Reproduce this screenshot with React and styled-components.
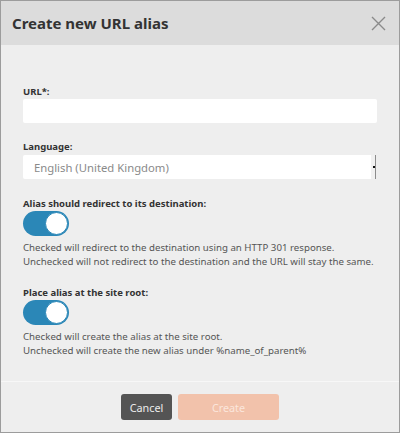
import styled, { createGlobalStyle } from 'styled-components'

const GlobalStyle = createGlobalStyle`
  html, body {
    margin: 0;
    padding: 0;
    background: #eeeeee;
  }
  * {
    box-sizing: border-box;
  }
`

const Dialog = styled.div`
  width: 400px;
  height: 433px;
  display: flex;
  flex-direction: column;
  border: 1px solid #9c9c9c;
  background: #eeeeee;
  font-family: "Noto Sans", "Open Sans", sans-serif;
  color: #333;
`

const Header = styled.div`
  height: 44px;
  flex: none;
  display: flex;
  align-items: center;
  justify-content: space-between;
  padding: 0 11px 0 11px;
  background: #dcdcdc;
`

const Title = styled.h1`
  margin: 0;
  font-size: 15px;
  font-weight: 700;
  color: #333;
`

const CloseButton = styled.button`
  width: 18px;
  height: 18px;
  padding: 0;
  margin-right: 1px;
  border: 0;
  background: none;
  display: flex;
  align-items: center;
  justify-content: center;
`

const Body = styled.div`
  flex: 1;
  padding: 40px 22px 0 22px;
  display: flex;
  flex-direction: column;
`

const Field = styled.div`
  display: flex;
  flex-direction: column;
  margin-bottom: ${(p) => p.$gap}px;
`

const Label = styled.label`
  font-size: 9.5px;
  font-weight: 700;
  line-height: 14px;
  color: #333;
  margin-bottom: ${(p) => p.$gap || 0}px;
`

const TextInput = styled.div`
  height: 24px;
  background: #fff;
  border-radius: 2px;
`

const Select = styled.div`
  height: 24px;
  display: flex;
  align-items: center;
  background: #fff;
  border-radius: 2px 0 0 2px;
  margin-right: 1px;
`

const SelectText = styled.span`
  flex: 1;
  padding-left: 11px;
  font-size: 11.3px;
  color: #8a8a8a;
`

const SelectEdge = styled.span`
  width: 5px;
  align-self: stretch;
  display: flex;
  align-items: center;
  background: #f1f1f1;
  border-right: 1px solid #8c8c8c;
  &::before {
    content: '';
    display: block;
    width: 2px;
    height: 2px;
    margin-left: 2px;
    background: #111;
  }
`

const Toggle = styled.span`
  width: 46px;
  height: 25px;
  border-radius: 13px;
  background: #2b87b7;
  display: flex;
  align-items: center;
  justify-content: ${(p) => (p.$on ? 'flex-end' : 'flex-start')};
  padding: 0 1px;
`

const Knob = styled.span`
  width: 23px;
  height: 23px;
  border-radius: 50%;
  background: #fff;
  border: 1.5px solid #2b87b7;
`

const Help = styled.p`
  margin: 5px 0 0 0;
  font-size: 9.7px;
  line-height: 14px;
  color: #555;
`

const Footer = styled.div`
  height: 51px;
  flex: none;
  display: flex;
  justify-content: center;
  align-items: flex-start;
  gap: 6px;
  padding-top: 12px;
  border-top: 1px solid #f7f7f7;
`

const Button = styled.button`
  height: 26px;
  width: ${(p) => p.$width}px;
  border: 0;
  border-radius: 3px;
  font-family: inherit;
  font-size: 10.8px;
  background: ${(p) => (p.$primary ? '#f2c2ab' : '#545454')};
  color: ${(p) => (p.$primary ? '#fbe6dc' : '#ececec')};
`

const App = () => (
  <Dialog>
    <GlobalStyle />
    <Header>
      <Title>Create new URL alias</Title>
      <CloseButton aria-label="Close">
        <svg width="15" height="15" viewBox="0 0 15 15">
          <path d="M1 1 L14 14 M14 1 L1 14" stroke="#8a8a8a" strokeWidth="1.4" fill="none" />
        </svg>
      </CloseButton>
    </Header>

    <Body>
      <Field $gap={17}>
        <Label>URL*:</Label>
        <TextInput />
      </Field>

      <Field $gap={18}>
        <Label $gap={1}>Language:</Label>
        <Select>
          <SelectText>English (United Kingdom)</SelectText>
          <SelectEdge />
        </Select>
      </Field>

      <Field $gap={17}>
        <Label>Alias should redirect to its destination:</Label>
        <Toggle $on>
          <Knob />
        </Toggle>
        <Help>
          Checked will redirect to the destination using an HTTP 301 response.
          <br />
          Unchecked will not redirect to the destination and the URL will stay the same.
        </Help>
      </Field>

      <Field $gap={0}>
        <Label>Place alias at the site root:</Label>
        <Toggle $on>
          <Knob />
        </Toggle>
        <Help>
          Checked will create the alias at the site root.
          <br />
          Unchecked will create the new alias under %name_of_parent%
        </Help>
      </Field>
    </Body>

    <Footer>
      <Button $width={51}>Cancel</Button>
      <Button $primary $width={101}>Create</Button>
    </Footer>
  </Dialog>
)

export default App
